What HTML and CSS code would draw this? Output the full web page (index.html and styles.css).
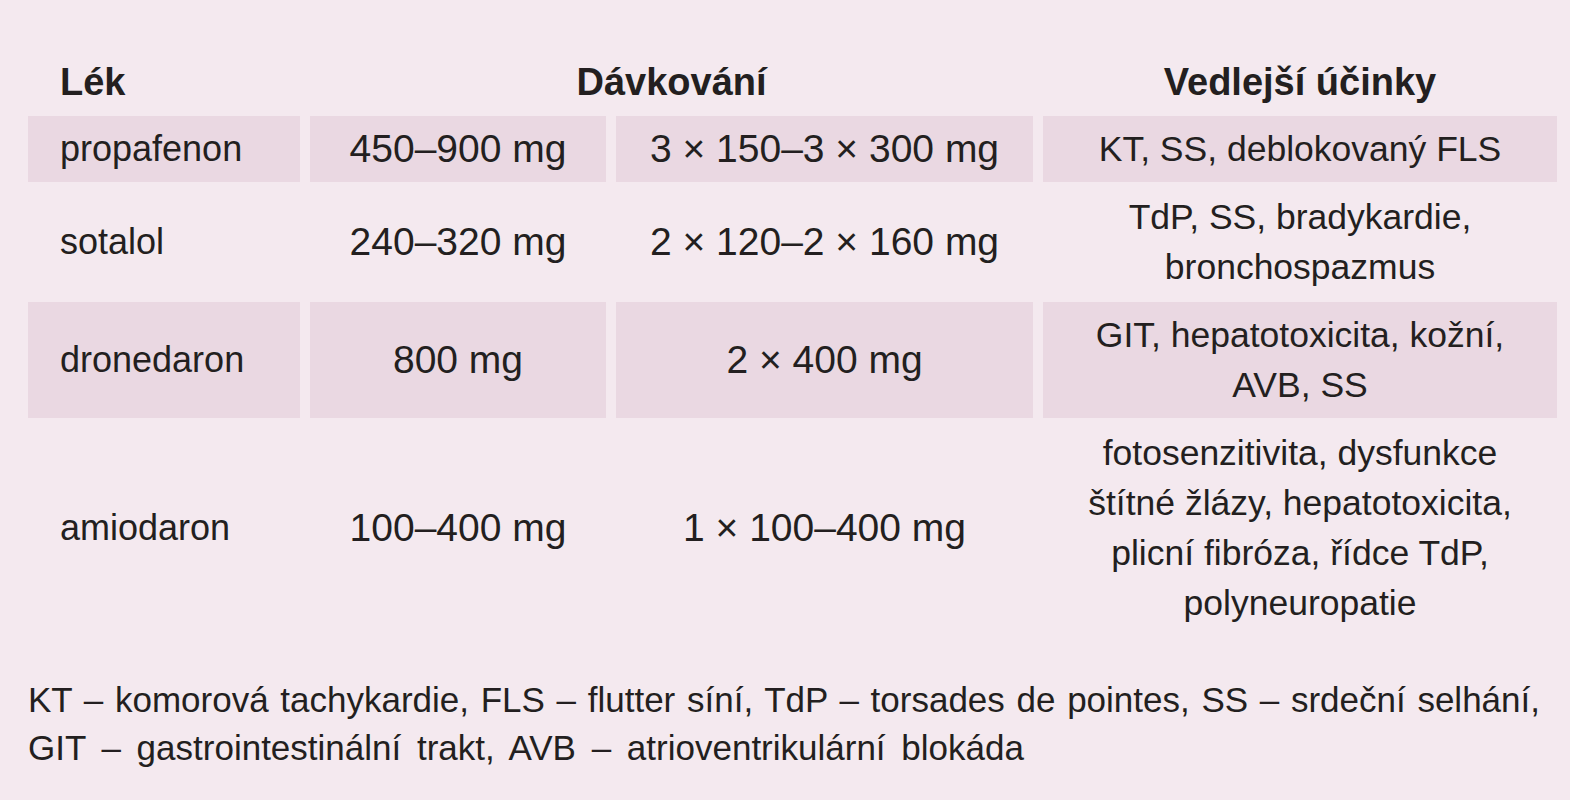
FILE: index.html
```html
<!DOCTYPE html>
<html lang="cs">
<head>
<meta charset="utf-8">
<title>Antiarytmika</title>
<link rel="stylesheet" href="styles.css">
</head>
<body>
<div class="page">
  <div class="grid">
    <div class="th th-left">Lék</div>
    <div class="th th-span">Dávkování</div>
    <div class="th th-center">Vedlejší účinky</div>

    <div class="td name fill">propafenon</div>
    <div class="td num fill">450–900 mg</div>
    <div class="td num fill">3 × 150–3 × 300 mg</div>
    <div class="td txt fill">KT, SS, deblokovaný FLS</div>

    <div class="td name">sotalol</div>
    <div class="td num">240–320 mg</div>
    <div class="td num">2 × 120–2 × 160 mg</div>
    <div class="td txt">TdP, SS, bradykardie,<br>bronchospazmus</div>

    <div class="td name fill">dronedaron</div>
    <div class="td num fill">800 mg</div>
    <div class="td num fill">2 × 400 mg</div>
    <div class="td txt fill">GIT, hepatotoxicita, kožní,<br>AVB, SS</div>

    <div class="td name">amiodaron</div>
    <div class="td num">100–400 mg</div>
    <div class="td num">1 × 100–400 mg</div>
    <div class="td txt">fotosenzitivita, dysfunkce<br>štítné žlázy, hepatotoxicita,<br>plicní fibróza, řídce TdP,<br>polyneuropatie</div>
  </div>
  <p class="note">
    <span class="note-line justified">KT – komorová tachykardie, FLS – flutter síní, TdP – torsades de pointes, SS – srdeční selhání,</span>
    <span class="note-line">GIT – gastrointestinální trakt, AVB – atrioventrikulární blokáda</span>
  </p>
</div>
</body>
</html>
```
FILE: styles.css
```css
html, body {
  margin: 0;
  padding: 0;
  background: #f4e9ef;
}

body {
  width: 1570px;
  height: 800px;
  overflow: hidden;
  font-family: "Liberation Sans", Arial, sans-serif;
  color: #231f20;
}

.page {
  padding: 57px 0 0 28px;
}

.grid {
  display: grid;
  grid-template-columns: 272px 296px 417px 514px;
  column-gap: 10px;
  row-gap: 2px;
}

.th {
  font-weight: bold;
  font-size: 38px;
  line-height: 50px;
  padding-bottom: 7px;
}

.th-left {
  padding-left: 32px;
}

.th-span {
  grid-column: 2 / 4;
  text-align: center;
}

.th-center {
  text-align: center;
}

.td {
  display: flex;
  flex-direction: column;
  justify-content: center;
  padding: 8px 0;
  line-height: 50px;
  font-size: 35.5px;
}

.fill {
  background: #ead8e2;
}

.name {
  padding-left: 32px;
  font-size: 36px;
}

.num {
  text-align: center;
  font-size: 39px;
}

.txt {
  text-align: center;
}

.note {
  margin: 40px 0 0 0;
  width: 1512px;
  font-size: 35px;
  line-height: 48px;
}

.note-line {
  display: block;
  word-spacing: 6px;
}

.note-line.justified {
  word-spacing: 0;
  text-align: justify;
  text-align-last: justify;
}
```
